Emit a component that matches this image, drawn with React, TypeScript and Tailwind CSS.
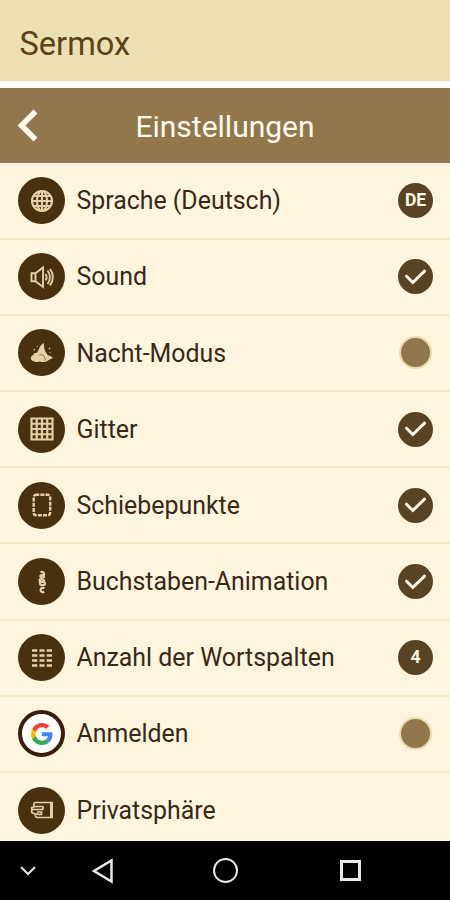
import type { ReactNode } from 'react'

type Status = 'on' | 'off' | 'none' | (string & {})

interface SettingsRowProps {
  icon: ReactNode
  label: string
  status: Status
  light?: boolean
}

const GlobeIcon = () => (
  <svg viewBox="0 0 24 24" className="w-6 h-6" fill="none" stroke="currentColor" strokeWidth="2.1">
    <circle cx="12" cy="12" r="10" />
    <ellipse cx="12" cy="12" rx="5" ry="10" />
    <path d="M12 2v20M2 12h20M4 7h16M4 17h16" />
  </svg>
)

const SoundIcon = () => (
  <svg viewBox="0 0 24 24" className="w-6 h-6" fill="none" stroke="currentColor" strokeWidth="1.9">
    <path d="M1.5 8.2h4v8h-4zM5.500 8.200l7.500-5.700v19.400l-7.500-5.700" />
    <path d="M15.500 9c1.300 1.800 1.300 4.600 0 6.400M17.500 5.500c3.200 3.800 3.200 9.600 0 13.400M20 4c3.800 4.800 3.800 11.600 0 16.400" />
  </svg>
)

const NightIcon = () => (
  <svg viewBox="0 0 24 24" className="w-6 h-6" fill="currentColor">
    <path d="M14 2c-.4 5 1 8.900 4 12.200 2.300.3 4.100 1.500 5 3-3 .3-4.200 2.300-6.500 3.200-2.400.9-4.800.9-7 .1-1.800.9-3.800.6-5.300 0C0 20-.4 15.500 3.300 14c.5-1.700 1.900-2.500 3.700-2.300C9 9.500 9 4.500 14 2z" />
    <path d="M9 14.600c1.800-1.600 5-.8 5.300 1.700 1.200.7 1.300 2.500 0 3.500" fill="none" stroke="#49310f" strokeWidth=".6" />
    <circle cx="4.300" cy="8.800" r=".8" />
    <circle cx="19.500" cy="7.500" r=".8" />
    <circle cx="7.200" cy="5.300" r=".6" />
    <circle cx="20" cy="11.500" r=".6" />
  </svg>
)

const GridIcon = () => (
  <svg viewBox="0 0 24 24" className="w-6 h-6" fill="none" stroke="currentColor" strokeWidth="2.2">
    <path d="M1.500 1.500h21v21h-21zM6.750 1.500v21M12 1.500v21M17.250 1.500v21M1.500 6.750h21M1.500 12h21M1.500 17.250h21" />
  </svg>
)

const DashedBoxIcon = () => (
  <svg viewBox="0 0 24 24" className="w-6 h-6" fill="none" stroke="currentColor" strokeWidth="2.400">
    <rect x="3.700" y="1.700" width="16.500" height="20.600" rx="2.500" strokeDasharray="4 1.200" strokeDashoffset="1" />
  </svg>
)

// the letters a, b, c running down the icon
const LettersIcon = () => (
  <svg viewBox="0 0 24 24" className="w-6 h-6" fill="none" stroke="currentColor" strokeWidth="2.200">
    <path d="M10.500 2.200c2.300-.7 3.500.1 3.500 1.600v4M14 5c-2.400-.2-3.900.4-3.700 1.600s2.400 1.400 3.700.3" />
    <path d="M9.500 8.700l.8 6.500M9.500 9.300h3c2 .2 2 2.600 0 2.600h-2.200 3c2.200.2 2.200 3.200 0 3.200h-3" />
    <path d="M14.500 18.300c-1.800-1-3.900-.2-3.900 1.700s2 2.700 3.700 1.700" />
  </svg>
)

const ColumnsIcon = () => (
  <svg viewBox="0 0 24 24" className="w-6 h-6" stroke="currentColor" strokeWidth="2.300">
    <path d="M2 4.500h5.300M9.500 4.500h5M16.700 4.500H22M2 9.500h5.300M9.500 9.500h5M16.700 9.500H22M2 14.500h5.300M9.500 14.500h5M16.700 14.500H22M2 19.500h5.300M9.500 19.500h5M16.700 19.500H22" />
  </svg>
)

const GoogleIcon = () => (
  <svg viewBox="0 0 48 48" className="w-[22px] h-[22px]">
    <path fill="#EA4335" d="M24 9.500c3.540 0 6.710 1.220 9.210 3.600l6.850-6.850C35.900 2.380 30.470 0 24 0 14.620 0 6.510 5.380 2.560 13.220l7.980 6.190C12.430 13.720 17.740 9.500 24 9.500z" />
    <path fill="#4285F4" d="M46.980 24.550c0-1.570-.15-3.090-.38-4.550H24v9.020h12.940c-.58 2.960-2.260 5.480-4.780 7.180l7.730 6c4.510-4.180 7.090-10.360 7.090-17.650z" />
    <path fill="#FBBC05" d="M10.530 28.590c-.48-1.450-.76-2.990-.76-4.590s.27-3.140.76-4.590l-7.980-6.190C.92 16.460 0 20.120 0 24s.92 7.540 2.560 10.780l7.970-6.190z" />
    <path fill="#34A853" d="M24 48c6.480 0 11.930-2.130 15.890-5.810l-7.730-6c-2.150 1.450-4.920 2.300-8.160 2.300-6.260 0-11.570-4.220-13.470-9.910l-7.980 6.190C6.510 42.620 14.620 48 24 48z" />
  </svg>
)

const PrivacyIcon = () => (
  <svg viewBox="0 0 24 24" className="w-6 h-6" fill="none" stroke="currentColor" strokeWidth="1.700">
    <path d="M3.800 8V6.500c0-1.200.8-2 2-2H22v15H7.500c-1.200 0-2-.8-2.500-2.200" />
    <path d="M21.500 4v16" strokeWidth="3" />
    <path d="M13 8.500H5.500L1.700 9.700v4.800l3.800 1.700h3M2 11.500h9.500c1.500 0 2-1 1.500-3M7 14h4.500v2.500H8" />
  </svg>
)

const rows: SettingsRowProps[] = [
  { icon: <GlobeIcon />, label: 'Sprache (Deutsch)', status: 'DE' },
  { icon: <SoundIcon />, label: 'Sound', status: 'on' },
  { icon: <NightIcon />, label: 'Nacht-Modus', status: 'off' },
  { icon: <GridIcon />, label: 'Gitter', status: 'on' },
  { icon: <DashedBoxIcon />, label: 'Schiebepunkte', status: 'on' },
  { icon: <LettersIcon />, label: 'Buchstaben-Animation', status: 'on' },
  { icon: <ColumnsIcon />, label: 'Anzahl der Wortspalten', status: '4' },
  { icon: <GoogleIcon />, label: 'Anmelden', status: 'off', light: true },
  { icon: <PrivacyIcon />, label: 'Privatsphäre', status: 'none' },
]

function StatusBadge({ status }: { status: Status }) {
  if (status === 'none') return null
  if (status === 'off') {
    return <span className="w-[33px] h-[33px] mr-px rounded-full border-2 border-[#eadcae] bg-[#92774c]" />
  }
  return (
    <span className="w-[35px] h-[35px] rounded-full bg-[#5a4324] text-[#fff7e6] flex items-center justify-center">
      {status === 'on' ? (
        <svg viewBox="0 0 24 24" className="w-6 h-6" fill="none" stroke="currentColor" strokeWidth="3">
          <path d="M2.500 11.200l6.300 6.300L20.500 6.100" strokeLinecap="round" />
        </svg>
      ) : (
        <span className="text-[17.500px] leading-none font-bold pt-px">{status}</span>
      )}
    </span>
  )
}

function SettingsRow({ icon, label, status, light }: SettingsRowProps) {
  return (
    <li className="h-[76.2px] shrink-0 flex items-center pl-[18px] pr-[17px] border-b-2 border-[#f3e9c6]">
      <span
        className={`w-[47px] h-[47px] shrink-0 rounded-full flex items-center justify-center ${
          light ? 'bg-white border-4 border-[#3b1d0c]' : 'bg-[#49310f] text-[#e5d0a5]'
        }`}
      >
        {icon}
      </span>
      <span className="flex-1 ml-[11.500px] pt-[2px] text-[24.900px] leading-none text-[#3a2817]">{label}</span>
      <StatusBadge status={status} />
    </li>
  )
}

export default function App() {
  return (
    <div className="w-[450px] h-[900px] flex flex-col overflow-hidden bg-[#fff5df] font-['Roboto',sans-serif]">
      <header className="h-[81px] shrink-0 flex items-center pl-[19.500px] pt-[8px] bg-[#ecdfb2] text-[#5b4317]">
        <h1 className="text-[32.600px] leading-none">Sermox</h1>
      </header>

      <div className="h-[81.500px] shrink-0 grid grid-cols-[64px_1fr_64px] items-center border-t-[7px] border-white bg-[#92774c] text-[#fffaf0]">
        <svg viewBox="0 0 24 36" className="w-6 h-9 ml-4" fill="none" stroke="currentColor" strokeWidth="5.500">
          <path d="M19.500 4.500L5.500 18.500l14 14" />
        </svg>
        <h2 className="pt-[3px] text-center text-[30px] leading-none">Einstellungen</h2>
      </div>

      <ul className="flex-1 min-h-0 flex flex-col overflow-hidden pt-px">
        {rows.map((row) => (
          <SettingsRow key={row.label} {...row} />
        ))}
      </ul>

      {/* Android navigation bar */}
      <nav className="h-[59px] shrink-0 flex items-center bg-black text-[#e8e8e8]">
        <svg viewBox="0 0 18 12" className="w-[18px] h-3 ml-[19px]" fill="none" stroke="currentColor" strokeWidth="2">
          <path d="M2 2l7 7 7-7" />
        </svg>
        <svg viewBox="0 0 24 28" className="w-6 h-7 ml-[53px]" fill="none" stroke="currentColor" strokeWidth="2.500">
          <path d="M21.500 3.500v21L4 14z" />
        </svg>
        <span className="w-[25px] h-[25px] ml-[99px] rounded-full border-[2.500px] border-current" />
        <span className="w-[21px] h-[21px] ml-[102px] border-[3px] border-current" />
      </nav>
    </div>
  )
}
